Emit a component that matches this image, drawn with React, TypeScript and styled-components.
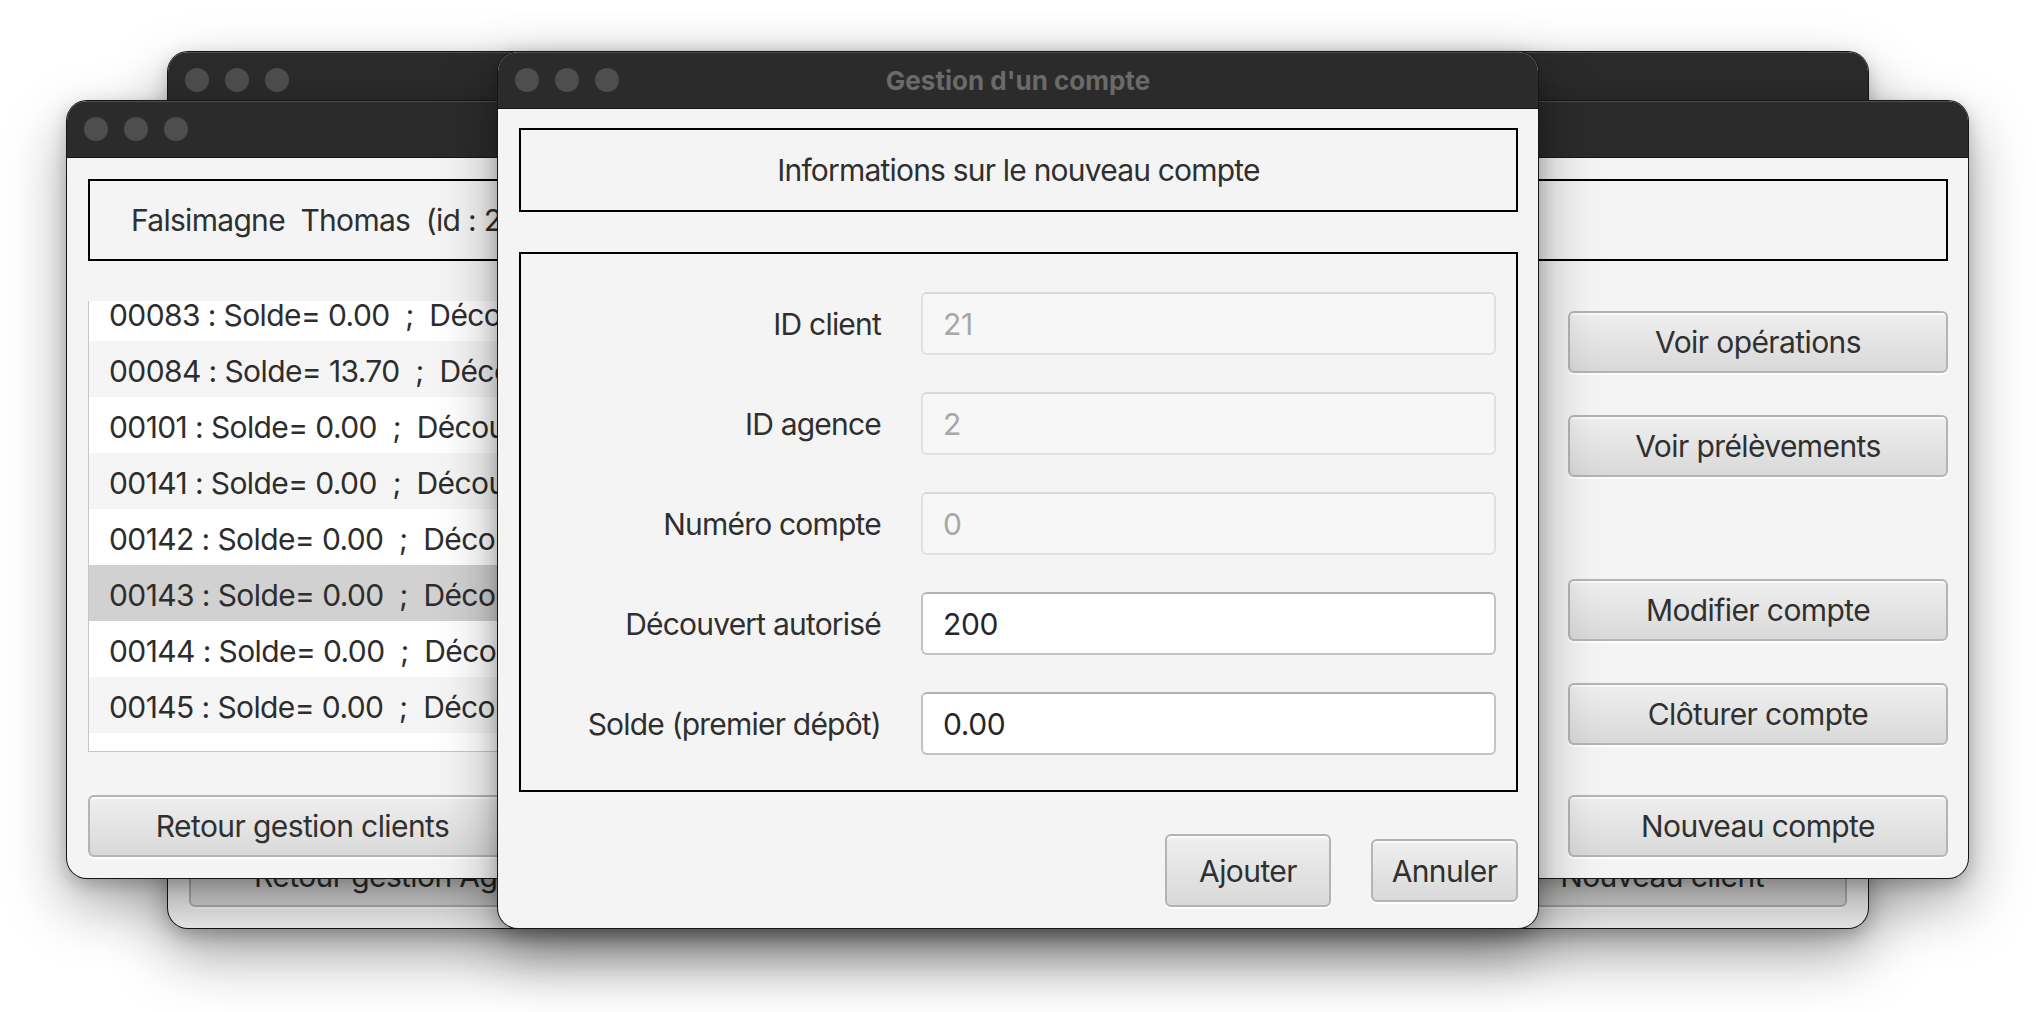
import React from "react";
import styled, { createGlobalStyle } from "styled-components";

const GlobalStyle = createGlobalStyle`
  html, body { margin: 0; padding: 0; background: #ffffff; }
  body { font-family: Inter, "Noto Sans", sans-serif; color: #333333; overflow: hidden; }
  *, *::before, *::after { box-sizing: border-box; }
`;

const Desktop = styled.main`
  position: relative;
  width: 2036px;
  height: 1012px;
  background: #ffffff;
  overflow: hidden;
`;

const Window = styled.section<{ $left: number; $top: number; $width: number; $height: number }>`
  position: absolute;
  left: ${(p) => p.$left}px;
  top: ${(p) => p.$top}px;
  width: ${(p) => p.$width}px;
  height: ${(p) => p.$height}px;
  display: flex;
  flex-direction: column;
  background: #f4f4f4;
  border-radius: 20px;
  overflow: hidden;
  box-shadow: 0 0 0 1px #161616, 0 26px 60px rgba(0, 0, 0, 0.36), 0 6px 18px rgba(0, 0, 0, 0.22);
`;

const TitleBar = styled.header`
  flex: 0 0 57px;
  display: grid;
  grid-template-columns: 1fr auto 1fr;
  align-items: center;
  padding: 0 17px;
  background: #2b2b2b;
  border-bottom: 1px solid #151515;
  box-shadow: inset 0 1px 0 rgba(255, 255, 255, 0.16);
`;

const Lights = styled.div`
  display: flex;
  gap: 16px;
`;

const Light = styled.span`
  width: 24px;
  height: 24px;
  border-radius: 50%;
  background: #4e4e4e;
`;

const WindowTitle = styled.h1`
  margin: 0;
  font: 700 26px Inter, "Noto Sans", sans-serif;
  color: #6a6a6a;
  white-space: nowrap;
`;

const Button = styled.button<{ $width?: number; $height?: number }>`
  width: ${(p) => (p.$width ? `${p.$width}px` : "100%")};
  height: ${(p) => p.$height ?? 62}px;
  flex: 0 0 auto;
  padding: 0;
  font: 400 30px Inter, "Noto Sans", sans-serif;
  letter-spacing: -0.6px;
  color: #303030;
  background: linear-gradient(#efefef, #d9d9d9);
  border: 2px solid #b4b4b4;
  border-radius: 6px;
  box-shadow: inset 0 2px 0 rgba(255, 255, 255, 0.7), 0 2px 0 rgba(255, 255, 255, 0.9);
  white-space: nowrap;
`;

/* ---------- back window (agence) ---------- */

const AgencyBody = styled.div`
  flex: 1;
  display: flex;
  flex-direction: column;
  justify-content: flex-end;
  padding: 0 21px 21px 21px;
`;

const AgencyFooter = styled.div`
  display: flex;
  justify-content: space-between;
  align-items: flex-end;
`;

/* ---------- accounts window ---------- */

const AccountsBody = styled.div`
  flex: 1;
  display: flex;
  flex-direction: column;
  padding: 21px 20px 21px 21px;
`;

const ClientBox = styled.div`
  flex: 0 0 82px;
  display: flex;
  align-items: center;
  padding-left: 41px;
  border: 2px solid #000000;
  font-size: 30px;
  letter-spacing: -0.7px;
  white-space: pre;
  color: #2f2f2f;
`;

const AccountsMain = styled.div`
  flex: 1;
  display: flex;
  gap: 38px;
`;

const LeftColumn = styled.div`
  flex: 1;
  display: flex;
  flex-direction: column;
  padding-top: 40px;
  gap: 43px;
`;

const ListView = styled.div`
  height: 451px;
  background: #ffffff;
  border: 1px solid #c6c6c6;
  border-top: none;
  overflow: hidden;
`;

const ListTrack = styled.ul<{ $scroll: number }>`
  list-style: none;
  margin: ${(p) => -p.$scroll}px 0 0 0;
  padding: 0;
`;

const ListRow = styled.li<{ $odd: boolean; $selected: boolean }>`
  height: 56px;
  display: flex;
  align-items: center;
  padding: 4px 0 0 20px;
  font-size: 30px;
  letter-spacing: -0.6px;
  white-space: pre;
  color: #2d2d2d;
  background: ${(p) => (p.$selected ? "#d1d1d1" : p.$odd ? "#f5f5f5" : "#ffffff")};
`;

const RightColumn = styled.div`
  flex: 0 0 380px;
  display: flex;
  flex-direction: column;
  padding-top: 50px;
`;

const ButtonGroup = styled.div<{ $offset?: number }>`
  display: flex;
  flex-direction: column;
  gap: 42px;
  margin-top: ${(p) => p.$offset ?? 0}px;
`;

const BottomButton = styled.div`
  margin-top: auto;
`;

/* ---------- dialog ---------- */

const DialogBody = styled.div`
  flex: 1;
  display: flex;
  flex-direction: column;
  padding: 19px 20px 21px 21px;
`;

const InfoBox = styled.div`
  flex: 0 0 84px;
  display: flex;
  align-items: center;
  justify-content: center;
  border: 2px solid #000000;
  font-size: 30px;
  letter-spacing: -0.8px;
  color: #2f2f2f;
`;

const FormBox = styled.div`
  margin-top: 40px;
  border: 2px solid #000000;
  padding: 38px 20px 35px 20px;
  display: grid;
  grid-template-columns: 1fr 575px;
  column-gap: 40px;
  row-gap: 37px;
  align-items: center;
`;

const FieldLabel = styled.span`
  text-align: right;
  font-size: 30px;
  letter-spacing: -0.8px;
  color: #2f2f2f;
  white-space: nowrap;
`;

const Field = styled.div<{ $disabled?: boolean }>`
  height: 63px;
  display: flex;
  align-items: center;
  padding: 0 20px;
  font-size: 30px;
  letter-spacing: -0.4px;
  border-radius: 6px;
  color: ${(p) => (p.$disabled ? "#a7a7a7" : "#262626")};
  background: ${(p) => (p.$disabled ? "#f7f7f7" : "#ffffff")};
  border: 2px solid ${(p) => (p.$disabled ? "#e0e0e0" : "#c3c3c3")};
  border-top-color: ${(p) => (p.$disabled ? "#d9d9d9" : "#b3b3b3")};
`;

const DialogActions = styled.div`
  margin-top: auto;
  display: flex;
  justify-content: flex-end;
  align-items: center;
  gap: 40px;
`;

const TrafficLights = () => (
  <Lights>
    <Light />
    <Light />
    <Light />
  </Lights>
);

const accounts = [
  { id: "00083", solde: "0.00" },
  { id: "00084", solde: "13.70" },
  { id: "00101", solde: "0.00" },
  { id: "00141", solde: "0.00" },
  { id: "00142", solde: "0.00" },
  { id: "00143", solde: "0.00" },
  { id: "00144", solde: "0.00" },
  { id: "00145", solde: "0.00" },
];

const fields = [
  { label: "ID client", value: "21", disabled: true },
  { label: "ID agence", value: "2", disabled: true },
  { label: "Numéro compte", value: "0", disabled: true },
  { label: "Découvert autorisé", value: "200", disabled: false },
  { label: "Solde (premier dépôt)", value: "0.00", disabled: false },
];

export default function App() {
  return (
    <>
      <GlobalStyle />
      <Desktop>
        <Window $left={168} $top={52} $width={1700} $height={876}>
          <TitleBar>
            <TrafficLights />
          </TitleBar>
          <AgencyBody>
            <AgencyFooter>
              <Button $width={456}>Retour gestion Agences</Button>
              <Button $width={370}>Nouveau client</Button>
            </AgencyFooter>
          </AgencyBody>
        </Window>

        <Window $left={67} $top={101} $width={1901} $height={777}>
          <TitleBar>
            <TrafficLights />
          </TitleBar>
          <AccountsBody>
            <ClientBox>{"Falsimagne  Thomas  (id : 21)"}</ClientBox>
            <AccountsMain>
              <LeftColumn>
                <ListView>
                  <ListTrack $scroll={16}>
                    {accounts.map((a, i) => (
                      <ListRow key={a.id} $odd={i % 2 === 1} $selected={a.id === "00143"}>
                        {`${a.id} : Solde= ${a.solde}  ;  Découvert`}
                      </ListRow>
                    ))}
                  </ListTrack>
                </ListView>
                <Button $width={429}>Retour gestion clients</Button>
              </LeftColumn>
              <RightColumn>
                <ButtonGroup>
                  <Button>Voir opérations</Button>
                  <Button>Voir prélèvements</Button>
                </ButtonGroup>
                <ButtonGroup $offset={102}>
                  <Button>Modifier compte</Button>
                  <Button>Clôturer compte</Button>
                </ButtonGroup>
                <BottomButton>
                  <Button>Nouveau compte</Button>
                </BottomButton>
              </RightColumn>
            </AccountsMain>
          </AccountsBody>
        </Window>

        <Window $left={498} $top={52} $width={1040} $height={876}>
          <TitleBar>
            <TrafficLights />
            <WindowTitle>Gestion d'un compte</WindowTitle>
          </TitleBar>
          <DialogBody>
            <InfoBox>Informations sur le nouveau compte</InfoBox>
            <FormBox>
              {fields.map((f) => (
                <React.Fragment key={f.label}>
                  <FieldLabel>{f.label}</FieldLabel>
                  <Field $disabled={f.disabled}>{f.value}</Field>
                </React.Fragment>
              ))}
            </FormBox>
            <DialogActions>
              <Button $width={166} $height={73}>Ajouter</Button>
              <Button $width={147} $height={63}>Annuler</Button>
            </DialogActions>
          </DialogBody>
        </Window>
      </Desktop>
    </>
  );
}
